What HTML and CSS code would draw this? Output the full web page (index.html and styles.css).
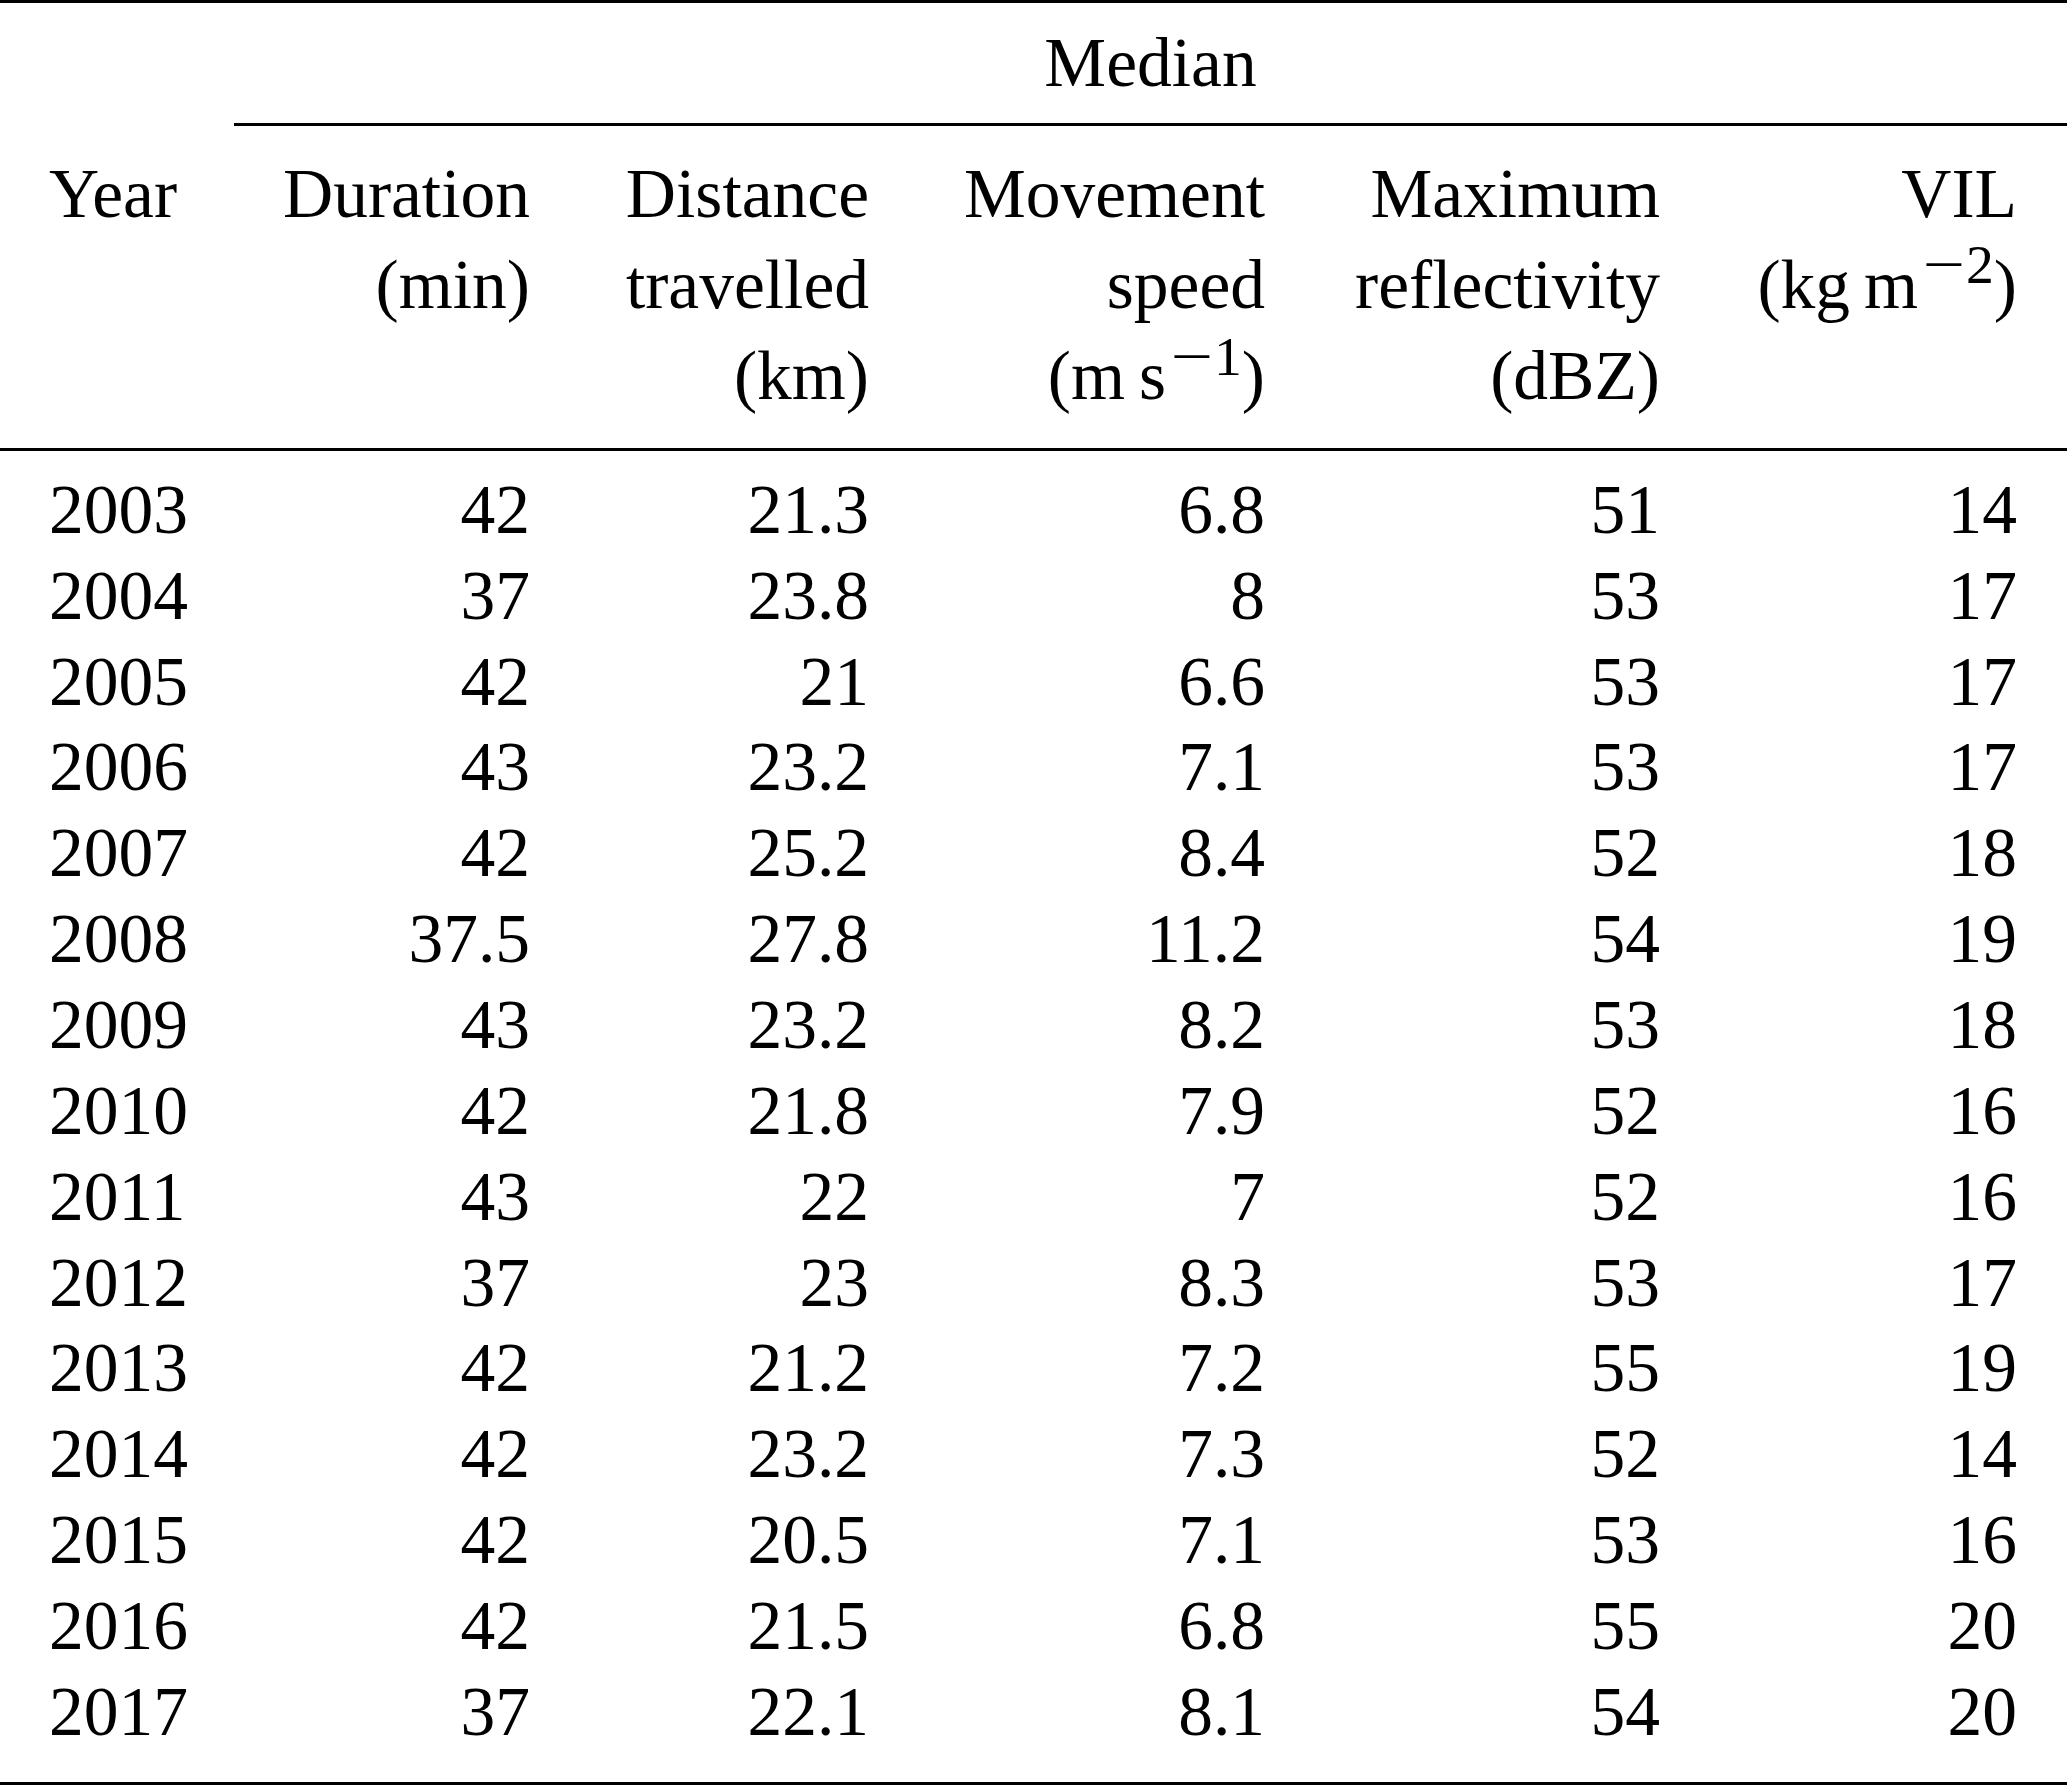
FILE: index.html
```html
<!DOCTYPE html>
<html lang="en">
<head>
<meta charset="utf-8">
<title>Median storm characteristics</title>
<link rel="stylesheet" href="styles.css">
</head>
<body>
<div class="tbl">
  <div class="rule"></div>
  <div class="grid group-head">
    <div class="cell first"></div>
    <div class="median">Median</div>
  </div>
  <div class="cmid"></div>
  <div class="grid col-head">
    <div class="cell first">Year</div>
    <div class="cell">Duration<br>(min)</div>
    <div class="cell">Distance<br>travelled<br>(km)</div>
    <div class="cell">Movement<br>speed<br>(m&#8201;s<span class="sup"><span class="minus">&minus;</span>1</span>)</div>
    <div class="cell">Maximum<br>reflectivity<br>(dBZ)</div>
    <div class="cell last">VIL<br>(kg&#8201;m<span class="sup"><span class="minus">&minus;</span>2</span>)</div>
  </div>
  <div class="rule"></div>
  <div class="grid body">
    <div class="cell first">2003</div><div class="cell">42</div><div class="cell">21.3</div><div class="cell">6.8</div><div class="cell">51</div><div class="cell last">14</div>
    <div class="cell first">2004</div><div class="cell">37</div><div class="cell">23.8</div><div class="cell">8</div><div class="cell">53</div><div class="cell last">17</div>
    <div class="cell first">2005</div><div class="cell">42</div><div class="cell">21</div><div class="cell">6.6</div><div class="cell">53</div><div class="cell last">17</div>
    <div class="cell first">2006</div><div class="cell">43</div><div class="cell">23.2</div><div class="cell">7.1</div><div class="cell">53</div><div class="cell last">17</div>
    <div class="cell first">2007</div><div class="cell">42</div><div class="cell">25.2</div><div class="cell">8.4</div><div class="cell">52</div><div class="cell last">18</div>
    <div class="cell first">2008</div><div class="cell">37.5</div><div class="cell">27.8</div><div class="cell">11.2</div><div class="cell">54</div><div class="cell last">19</div>
    <div class="cell first">2009</div><div class="cell">43</div><div class="cell">23.2</div><div class="cell">8.2</div><div class="cell">53</div><div class="cell last">18</div>
    <div class="cell first">2010</div><div class="cell">42</div><div class="cell">21.8</div><div class="cell">7.9</div><div class="cell">52</div><div class="cell last">16</div>
    <div class="cell first">2011</div><div class="cell">43</div><div class="cell">22</div><div class="cell">7</div><div class="cell">52</div><div class="cell last">16</div>
    <div class="cell first">2012</div><div class="cell">37</div><div class="cell">23</div><div class="cell">8.3</div><div class="cell">53</div><div class="cell last">17</div>
    <div class="cell first">2013</div><div class="cell">42</div><div class="cell">21.2</div><div class="cell">7.2</div><div class="cell">55</div><div class="cell last">19</div>
    <div class="cell first">2014</div><div class="cell">42</div><div class="cell">23.2</div><div class="cell">7.3</div><div class="cell">52</div><div class="cell last">14</div>
    <div class="cell first">2015</div><div class="cell">42</div><div class="cell">20.5</div><div class="cell">7.1</div><div class="cell">53</div><div class="cell last">16</div>
    <div class="cell first">2016</div><div class="cell">42</div><div class="cell">21.5</div><div class="cell">6.8</div><div class="cell">55</div><div class="cell last">20</div>
    <div class="cell first">2017</div><div class="cell">37</div><div class="cell">22.1</div><div class="cell">8.1</div><div class="cell">54</div><div class="cell last">20</div>
  </div>
  <div class="rule"></div>
</div>
</body>
</html>
```

FILE: styles.css
```css
html, body {
  margin: 0;
  padding: 0;
  background: #ffffff;
}

body {
  color: #000000;
  font-family: "Liberation Serif", "Times New Roman", serif;
  font-size: 69.5px;
}

.tbl {
  width: 2067px;
}

.rule {
  height: 3px;
  background: #000000;
}

.grid {
  display: grid;
  grid-template-columns: 234px 338px 339px 396px 395px 365px;
}

.cell {
  text-align: right;
  padding-right: 42px;
  white-space: nowrap;
}

.cell.first {
  text-align: left;
  padding-left: 49px;
  padding-right: 0;
}

.cell.last {
  padding-right: 50px;
}

.group-head {
  padding-top: 16.6px;
  line-height: 85.84px;
}

.median {
  grid-column: 2 / 7;
  text-align: center;
}

.cmid {
  margin: 18px 0 0 234px;
  height: 3px;
  background: #000000;
}

.col-head {
  line-height: 91.3px;
  padding-top: 21.2px;
  padding-bottom: 26px;
}

.body {
  line-height: 85.84px;
  padding-top: 16.4px;
  padding-bottom: 27.5px;
}

.sup {
  font-size: 0.8em;
  line-height: 0;
  vertical-align: 0.44em;
  margin-left: 0.06em;
}

.minus {
  display: inline-block;
  transform: scaleX(1.35);
  margin: 0 0.12em;
}
```
